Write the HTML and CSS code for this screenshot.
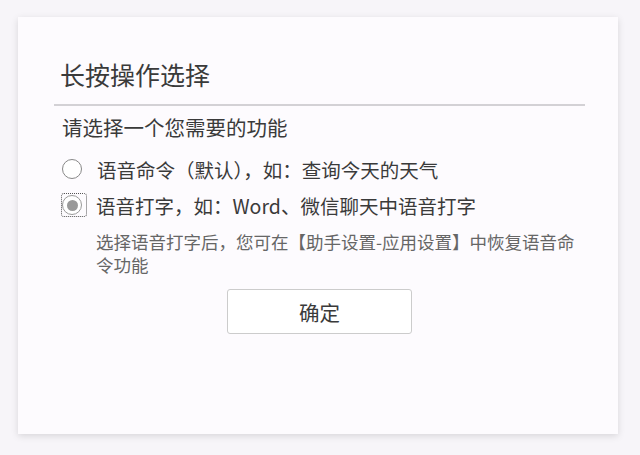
FILE: index.html
```html
<!DOCTYPE html>
<html lang="zh">
<head>
    <meta charset="UTF-8">
    <title>长按操作选择</title>
    <link rel="stylesheet" href="styles.css">
</head>
<body>

<div class="dialog">
    <div class="header">
        <h1>长按操作选择</h1>
    </div>

    <p class="prompt">请选择一个您需要的功能</p>

    <div class="options">
        <div class="option">
            <span class="radio"></span>
            <span class="label">语音命令（默认），如：查询今天的天气</span>
        </div>
        <div class="option">
            <span class="focus"><span class="radio checked"></span></span>
            <span class="label">语音打字，如：Word、微信聊天中语音打字</span>
        </div>
    </div>

    <p class="note">选择语音打字后，您可在【助手设置-应用设置】中恢复语音命令功能</p>

    <div class="actions">
        <button class="ok-button">确定</button>
    </div>
</div>

</body>
</html>
```

FILE: styles.css
```css
body {
    margin: 0;
    padding: 17px 22px 21px 18px;
    background-color: #f7f5f9;
    font-family: "Noto Sans CJK SC", "Noto Sans", sans-serif;
    color: #3a3a3a;
}
.dialog {
    width: 600px;
    height: 417px;
    box-sizing: border-box;
    padding: 0 33px 0 36px;
    background-color: #fdfbfe;
    box-shadow: 0 2px 7px rgba(0, 0, 0, 0.13);
}
.header {
    padding-top: 43px;
    border-bottom: 2px solid #d3d1d5;
}
h1 {
    margin: 0 0 0 6px;
    font-size: 25px;
    font-weight: normal;
    line-height: 29px;
    padding-bottom: 15px;
}
.prompt {
    margin: 7px 0 0 8px;
    font-size: 20.5px;
    line-height: 28px;
}
.options {
    margin: 10px 0 0 8px;
}
.option {
    display: flex;
    align-items: center;
    height: 36px;
    font-size: 19.5px;
}
.radio {
    width: 18px;
    height: 18px;
    border: 1px solid #888;
    border-radius: 50%;
    background-color: #fff;
    box-sizing: content-box;
    display: flex;
    align-items: center;
    justify-content: center;
}
.radio.checked {
    border-color: #999;
}
.radio.checked::after {
    content: "";
    width: 11px;
    height: 11px;
    border-radius: 50%;
    background-color: #999;
}
.focus {
    display: flex;
    padding: 1px 4px 1px 0;
    margin-right: -5px;
    outline: 1px dotted #555;
    outline-offset: 0;
    border-radius: 2px;
}
.label {
    margin-left: 15px;
}
.note {
    margin: 7px 0 0 42px;
    font-size: 17.5px;
    line-height: 23px;
    color: #666;
}
.actions {
    display: flex;
    justify-content: center;
    margin-top: 13px;
}
.ok-button {
    width: 185px;
    height: 45px;
    background-color: #fff;
    border: 1px solid #ccc;
    border-radius: 3px;
    font-family: inherit;
    font-size: 20.5px;
    color: #3a3a3a;
}
```
